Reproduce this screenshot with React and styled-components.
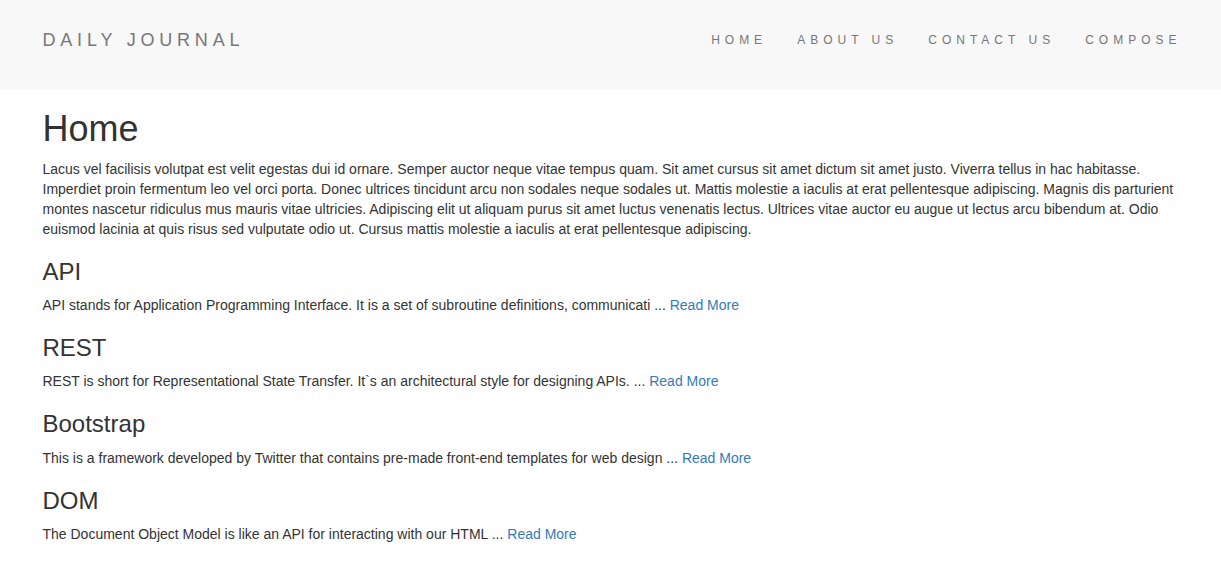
import React from "react";
import styled, { createGlobalStyle } from "styled-components";

const GlobalStyle = createGlobalStyle`
  * { box-sizing: border-box; }
  html, body { margin: 0; padding: 0; }
  body {
    background: #fff;
    color: #333;
    font-family: "Liberation Sans", Arial, Helvetica, sans-serif;
    font-size: 14px;
    line-height: 1.42857143;
  }
`;

const Navbar = styled.nav`
  background: #f8f8f8;
  height: 89px;
  margin-bottom: 20px;
`;

const Container = styled.div`
  width: 1170px;
  margin: 0 auto;
  padding: 0 14px 0 17px;
`;

const NavInner = styled(Container)`
  display: flex;
  justify-content: space-between;
  align-items: flex-start;
  padding-top: 30px;
`;

const Brand = styled.a`
  display: block;
  font-size: 18px;
  line-height: 20px;
  letter-spacing: 4.8px;
  color: #777;
  text-decoration: none;
  text-transform: uppercase;
`;

const NavList = styled.ul`
  display: flex;
  list-style: none;
  margin: 0 -15px 0 0;
  padding: 0;
`;

const NavLink = styled.a`
  display: block;
  padding: 0 15px;
  font-size: 12px;
  line-height: 20px;
  letter-spacing: 5px;
  color: #777;
  text-decoration: none;
  text-transform: uppercase;
`;

const Main = styled(Container)``;

const PageTitle = styled.h1`
  font-size: 36px;
  font-weight: 500;
  line-height: 1.1;
  margin: 20px 0 10px;
  color: #333;
`;

const Paragraph = styled.p`
  margin: 0 0 10px;
`;

const Post = styled.section`
  display: block;
`;

const PostTitle = styled.h3`
  font-size: 24px;
  font-weight: 500;
  line-height: 1.1;
  margin: 20px 0 10px;
  color: #333;
`;

const ReadMore = styled.a`
  color: #337ab7;
  text-decoration: none;
`;

const posts = [
  {
    title: "API",
    body: "API stands for Application Programming Interface. It is a set of subroutine definitions, communicati ...",
  },
  {
    title: "REST",
    body: "REST is short for Representational State Transfer. It`s an architectural style for designing APIs. ...",
  },
  {
    title: "Bootstrap",
    body: "This is a framework developed by Twitter that contains pre-made front-end templates for web design ...",
  },
  {
    title: "DOM",
    body: "The Document Object Model is like an API for interacting with our HTML ...",
  },
];

const intro =
  "Lacus vel facilisis volutpat est velit egestas dui id ornare. Semper auctor neque vitae tempus quam. Sit amet cursus sit amet dictum sit amet justo. Viverra tellus in hac habitasse. Imperdiet proin fermentum leo vel orci porta. Donec ultrices tincidunt arcu non sodales neque sodales ut. Mattis molestie a iaculis at erat pellentesque adipiscing. Magnis dis parturient montes nascetur ridiculus mus mauris vitae ultricies. Adipiscing elit ut aliquam purus sit amet luctus venenatis lectus. Ultrices vitae auctor eu augue ut lectus arcu bibendum at. Odio euismod lacinia at quis risus sed vulputate odio ut. Cursus mattis molestie a iaculis at erat pellentesque adipiscing.";

export default function App() {
  return (
    <>
      <GlobalStyle />
      <Navbar>
        <NavInner>
          <Brand href="#">Daily Journal</Brand>
          <NavList>
            {["Home", "About Us", "Contact Us", "Compose"].map((item) => (
              <li key={item}>
                <NavLink href="#">{item}</NavLink>
              </li>
            ))}
          </NavList>
        </NavInner>
      </Navbar>
      <Main>
        <PageTitle>Home</PageTitle>
        <Paragraph>{intro}</Paragraph>
        {posts.map((p) => (
          <Post key={p.title}>
            <PostTitle>{p.title}</PostTitle>
            <Paragraph>
              {p.body} <ReadMore href="#">Read More</ReadMore>
            </Paragraph>
          </Post>
        ))}
      </Main>
    </>
  );
}
